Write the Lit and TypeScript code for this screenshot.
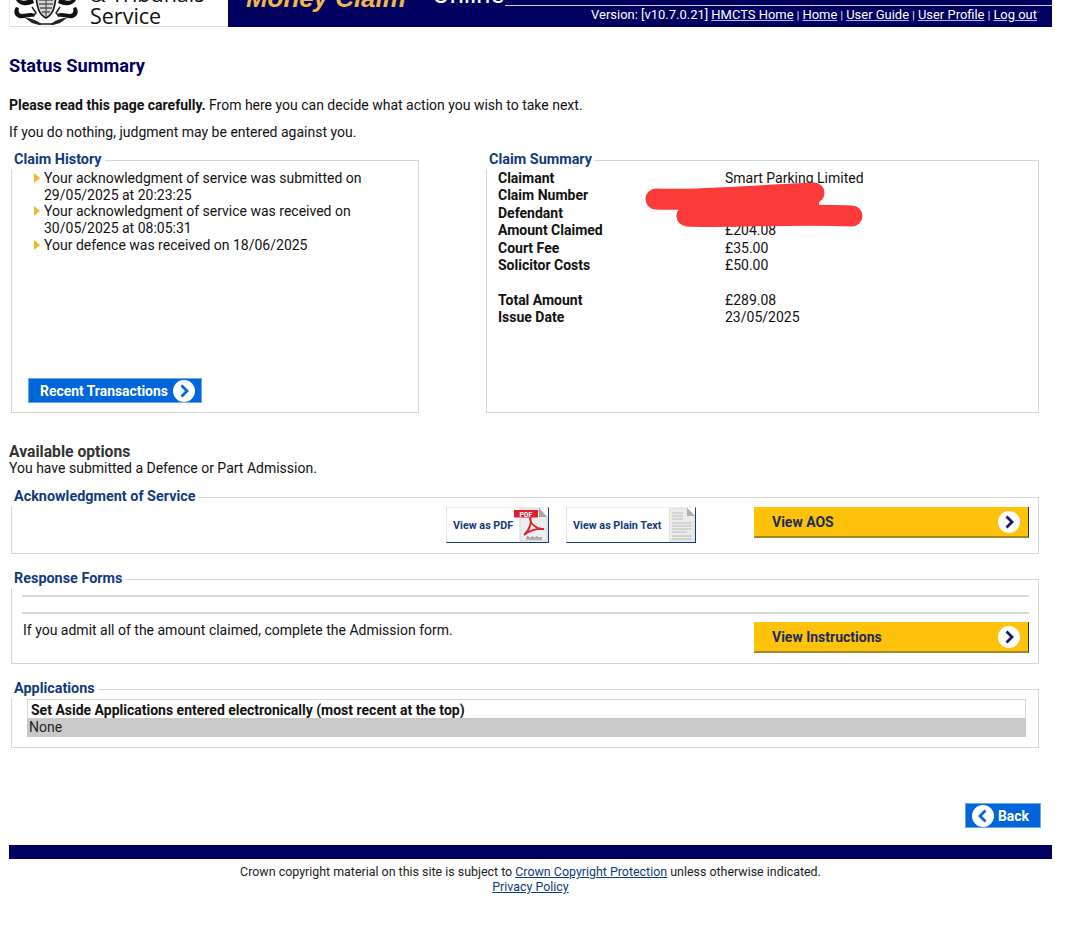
import { LitElement, html, css, svg } from "lit";
import { customElement } from "lit/decorators.js";

const chevron = (dir: "right" | "left", color: string) => html`<svg class="chev" viewBox="0 0 22 22" width="22" height="22">
  <circle cx="11" cy="11" r="11" fill="#fff"></circle>
  <path d=${dir === "right" ? "M8.5 5.5 L14 11 L8.5 16.5" : "M13.5 5.5 L8 11 L13.5 16.5"} fill="none" stroke=${color} stroke-width="2.8"></path>
</svg>`;

const crest = svg`<svg class="crest" viewBox="0 0 68 27" width="68" height="27">
  <path d="M24 -3 C25 8 27 16 34 19 C41 16 43 8 44 -3 Z" fill="#d8d8d8" stroke="#111" stroke-width="1.6"></path>
  <path d="M27 1 L41 1 M27 5 L41 5 M28 9 L40 9 M30 13 L38 13 M34 -2 L34 18" stroke="#555" stroke-width="1.3"></path>
  <path d="M20 -2 C17 1 13 3 8 1 L4 -1 C3 2 7 5 11 6 C16 7 19 5 22 4 Z" fill="#111"></path>
  <path d="M48 -2 C51 1 55 3 60 1 L64 -1 C65 2 61 5 57 6 C52 7 49 5 46 4 Z" fill="#111"></path>
  <path d="M4 8 C1 12 2 17 7 19 C12 20 17 17 22 18 L23 15 C18 13 14 15 10 15 C7 15 6 12 7 9 Z" fill="#111"></path>
  <path d="M64 8 C67 12 66 17 61 19 C56 20 51 17 46 18 L45 15 C50 13 54 15 58 15 C61 15 62 12 61 9 Z" fill="#111"></path>
  <path d="M20 8 L24 14 L21 17 M48 8 L44 14 L47 17" fill="none" stroke="#222" stroke-width="1.5"></path>
  <path d="M13 19 C19 19 24 21 28 24 L40 24 C44 21 49 19 55 19 L48 24 L41 26 L27 26 L20 24 Z" fill="#222"></path>
  <path d="M29 25 L39 25" stroke="#888" stroke-width="1"></path>
</svg>`;

const pdfIcon = html`<svg class="doc" viewBox="0 0 34 34" width="34" height="34">
  <path d="M6 0 H25 L33 9 V33 H6 Z" fill="#eeeeee" stroke="#d0d0d0"></path>
  <path d="M25 0 V9 H33 Z" fill="#a8a8a8"></path>
  <path d="M10 27 C16 22 18 13 16 9 C15 15 23 22 30 21 C23 20 14 23 10 27 Z" fill="none" stroke="#d3222a" stroke-width="1.8"></path>
  <rect x="0" y="2" width="24" height="7.5" fill="#e01e2b"></rect>
  <text x="12" y="8.6" font-size="7" font-weight="700" fill="#fff" text-anchor="middle" font-family="Roboto, sans-serif">PDF</text>
  <text x="20" y="32" font-size="5.5" fill="#888" text-anchor="middle" font-family="Roboto, sans-serif">Adobe</text>
</svg>`;

const txtIcon = html`<svg class="doc" viewBox="0 0 26 34" width="26" height="34">
  <path d="M0 0 H18 L26 8 V33 H0 Z" fill="#ebebeb" stroke="#d8d8d8"></path>
  <path d="M18 0 V8 H26 Z" fill="#b0b0b0"></path>
  <path d="M3 5 H14 M3 8 H14 M3 11 H14 M3 15 H23 M3 18 H23 M3 21 H23 M3 24 H18 M3 28 H23 M3 31 H23" stroke="#bdbdbd" stroke-width="1.1"></path>
</svg>`;

@customElement("app-root")
export class AppRoot extends LitElement {
  static styles = css`
    :host { display: block; font-family: Roboto, "Liberation Sans", sans-serif; font-size: 14px; color: #111; background: #fff; height: 951px; overflow: hidden; }
    .page { width: 1043px; margin-left: 9px; display: flex; flex-direction: column; position: relative; }
    a { color: inherit; }
    header { display: flex; height: 27px; overflow: hidden; }
    .brand { width: 219px; box-sizing: border-box; border-bottom: 1px solid #ddd; border-left: 1px solid #e8e8e8; display: flex; align-items: flex-end; padding-left: 2px; gap: 12px; }
    .crest { flex: none; }
    .agency { font-family: "Open Sans", sans-serif; font-size: 21.5px; line-height: 22px; color: #111; margin-bottom: -1px; white-space: nowrap; margin-left: -2px; }
    .banner { flex: 1; background: #000060; display: flex; align-items: flex-end; position: relative; }
    .mc { position: absolute; left: 18px; bottom: 14px; font: italic 700 25.9px/30px "Liberation Sans", sans-serif; color: #f0b84a; white-space: nowrap; }
    .online { position: absolute; left: 204px; bottom: 18px; font: 400 25.7px/30px Roboto, sans-serif; color: #fff; white-space: nowrap; }
    .version { margin-left: auto; width: 547px; box-sizing: border-box; height: 22px; border-top: 1px solid #d8d0e0; color: #fff; font-size: 12.96px; line-height: 18px; text-align: right; padding-right: 15px; white-space: nowrap; }
    .version a { text-decoration-color: #b4b4ec; }
    .sep { font-size: 10px; }
    h1 { margin: 28px 0 0; font-size: 18.2px; line-height: 21px; font-weight: 700; color: #000060; }
    .intro { margin: 21px 0 0; line-height: 17px; }
    .intro + .intro { margin-top: 10px; }
    .top { display: flex; justify-content: space-between; margin: 11px 13px 0 2px; }
    fieldset { margin: 0; padding: 0; border: 1px solid #d6d6d6; box-sizing: border-box; min-width: 0; }
    legend { padding: 0 3px 2px; margin-left: -1px; font-size: 14.4px; font-weight: 700; line-height: 15px; color: #123a7a; white-space: nowrap; }
    .history { width: 408px; height: 261px; position: relative; }
    .history ul { margin: 0; padding: 1px 0 0 32px; }
    .history li { list-style: none; position: relative; line-height: 16.7px; width: 340px; }
    .history li::before { content: ""; position: absolute; left: -10px; top: 3px; border-left: 6px solid #eabb2a; border-top: 5px solid transparent; border-bottom: 5px solid transparent; }
    .btn-blue { display: inline-flex; align-items: center; box-sizing: border-box; background: #0066d9; border: 1px solid #6aa8ea; color: #fff; font-weight: 700; font-size: 13.9px; text-decoration: none; white-space: nowrap; }
    .recent { position: absolute; left: 16px; bottom: 9px; height: 25px; width: 174px; padding-left: 11px; gap: 5px; }
    .summary { width: 553px; height: 261px; }
    .rows { display: grid; grid-template-columns: 227px 1fr; grid-auto-rows: 17.4px; line-height: 17.4px; padding: 1px 0 0 11px; }
    .rows b { font-weight: 700; }
    .spacer { grid-column: 1 / 3; }
    .avail { margin-top: 31px; }
    .avail h2 { margin: 0; font-size: 15.7px; line-height: 16px; font-weight: 700; color: #333; }
    .avail p { margin: 0; line-height: 16px; }
    .wide { margin: 0 13px 0 2px; }
    .ack { margin-top: 13px; height: 65px; }
    .ack-row { display: flex; justify-content: flex-end; align-items: flex-start; padding: 1px 9px 0 0; }
    .docbtn { display: flex; align-items: center; justify-content: space-between; box-sizing: border-box; height: 36px; background: #fff; border: 1px solid #ececec; border-bottom: 1px solid #123a7a; border-right: 1px solid #123a7a; border-left: 1px solid #e0e0e8; color: #123a7a; font-size: 10.8px; font-weight: 700; padding-left: 6px; text-decoration: none; overflow: hidden; white-space: nowrap; }
    .doc { flex: none; }
    .pdf { width: 103px; margin-right: 17px; }
    .txt { width: 130px; margin-right: 58px; }
    .yellow { display: flex; align-items: center; justify-content: space-between; box-sizing: border-box; width: 275px; height: 31px; padding: 0 8px 0 18px; background: #ffc20a; border-bottom: 2px solid #a08a30; border-right: 1px solid #333; color: #1a2a5a; font-weight: 700; font-size: 14px; text-decoration: none; flex: none; }
    .resp { margin-top: 17px; height: 93px; }
    .resp-inner { padding: 7px 9px 0 10px; }
    .rule { border: 0; border-top: 2px solid #d9d9d9; margin: 0; }
    .rule + .rule { margin-top: 15px; }
    .resp-row { display: flex; justify-content: space-between; margin-top: 8px; }
    .resp-row span { line-height: 17px; margin-left: 1px; }
    .apps { margin-top: 17px; height: 67px; }
    .apps-inner { padding: 1px 12px 0 15px; }
    .apps .head { box-sizing: border-box; height: 19px; border: 1px solid #d6d6d6; border-bottom: 0; padding: 2px 0 0 3px; font-weight: 700; line-height: 17px; }
    .apps .none { height: 19px; background: #c9c9c9; padding-left: 2px; line-height: 19px; color: #222; }
    .backrow { display: flex; justify-content: flex-end; margin: 55px 11px 0 0; }
    .back { height: 25px; width: 76px; padding-left: 6px; gap: 4px; }
    .bar { height: 14px; background: #000060; margin-top: 17px; }
    footer { text-align: center; font-size: 12.43px; line-height: 15px; margin-top: 5px; color: #222; }
    footer a { color: #123a7a; }
    .scribble { position: absolute; left: 620px; top: 176px; pointer-events: none; }
  `;

  render() {
    return html`<div class="page">
      <header>
        <div class="brand">${crest}<div class="agency">&amp; Tribunals<br />Service</div></div>
        <div class="banner">
          <span class="mc">Money Claim</span><span class="online">Online</span>
          <div class="version">Version: [v10.7.0.21] <a href="#">HMCTS Home</a> <span class="sep">|</span> <a href="#">Home</a> <span class="sep">|</span> <a href="#">User Guide</a> <span class="sep">|</span> <a href="#">User Profile</a> <span class="sep">|</span> <a href="#">Log out</a></div>
        </div>
      </header>
      <h1>Status Summary</h1>
      <p class="intro"><b>Please read this page carefully.</b> From here you can decide what action you wish to take next.</p>
      <p class="intro">If you do nothing, judgment may be entered against you.</p>
      <div class="top">
        <fieldset class="history">
          <legend>Claim History</legend>
          <ul>
            <li>Your acknowledgment of service was submitted on 29/05/2025 at 20:23:25</li>
            <li>Your acknowledgment of service was received on 30/05/2025 at 08:05:31</li>
            <li>Your defence was received on 18/06/2025</li>
          </ul>
          <a class="btn-blue recent" href="#">Recent Transactions ${chevron("right", "#0066d9")}</a>
        </fieldset>
        <fieldset class="summary">
          <legend>Claim Summary</legend>
          <div class="rows">
            <b>Claimant</b><span>Smart Parking Limited</span>
            <b>Claim Number</b><span></span>
            <b>Defendant</b><span></span>
            <b>Amount Claimed</b><span>£204.08</span>
            <b>Court Fee</b><span>£35.00</span>
            <b>Solicitor Costs</b><span>£50.00</span>
            <div class="spacer"></div>
            <b>Total Amount</b><span>£289.08</span>
            <b>Issue Date</b><span>23/05/2025</span>
          </div>
        </fieldset>
      </div>
      <div class="avail">
        <h2>Available options</h2>
        <p>You have submitted a Defence or Part Admission.</p>
      </div>
      <fieldset class="wide ack">
        <legend>Acknowledgment of Service</legend>
        <div class="ack-row">
          <a class="docbtn pdf" href="#">View as PDF ${pdfIcon}</a>
          <a class="docbtn txt" href="#">View as Plain Text ${txtIcon}</a>
          <a class="yellow" href="#">View AOS ${chevron("right", "#1a1a6a")}</a>
        </div>
      </fieldset>
      <fieldset class="wide resp">
        <legend>Response Forms</legend>
        <div class="resp-inner">
          <hr class="rule" /><hr class="rule" />
          <div class="resp-row">
            <span>If you admit all of the amount claimed, complete the Admission form.</span>
            <a class="yellow" href="#">View Instructions ${chevron("right", "#1a1a6a")}</a>
          </div>
        </div>
      </fieldset>
      <fieldset class="wide apps">
        <legend>Applications</legend>
        <div class="apps-inner">
          <div class="head">Set Aside Applications entered electronically (most recent at the top)</div>
          <div class="none">None</div>
        </div>
      </fieldset>
      <div class="backrow"><a class="btn-blue back" href="#">${chevron("left", "#0066d9")} Back</a></div>
      <div class="bar"></div>
      <footer>Crown copyright material on this site is subject to <a href="#">Crown Copyright Protection</a> unless otherwise indicated.<br /><a href="#">Privacy Policy</a></footer>
      <svg class="scribble" width="250" height="60" viewBox="0 0 250 60">
        <path d="M27 23 C60 25 120 20 185 17" fill="none" stroke="#fb3a3a" stroke-width="21" stroke-linecap="round"></path>
        <path d="M58 40 C100 42 170 37 223 40" fill="none" stroke="#fb3a3a" stroke-width="21" stroke-linecap="round"></path>
        <path d="M120 29 L190 29" stroke="#fb3a3a" stroke-width="10"></path>
      </svg>
    </div>`;
  }
}
